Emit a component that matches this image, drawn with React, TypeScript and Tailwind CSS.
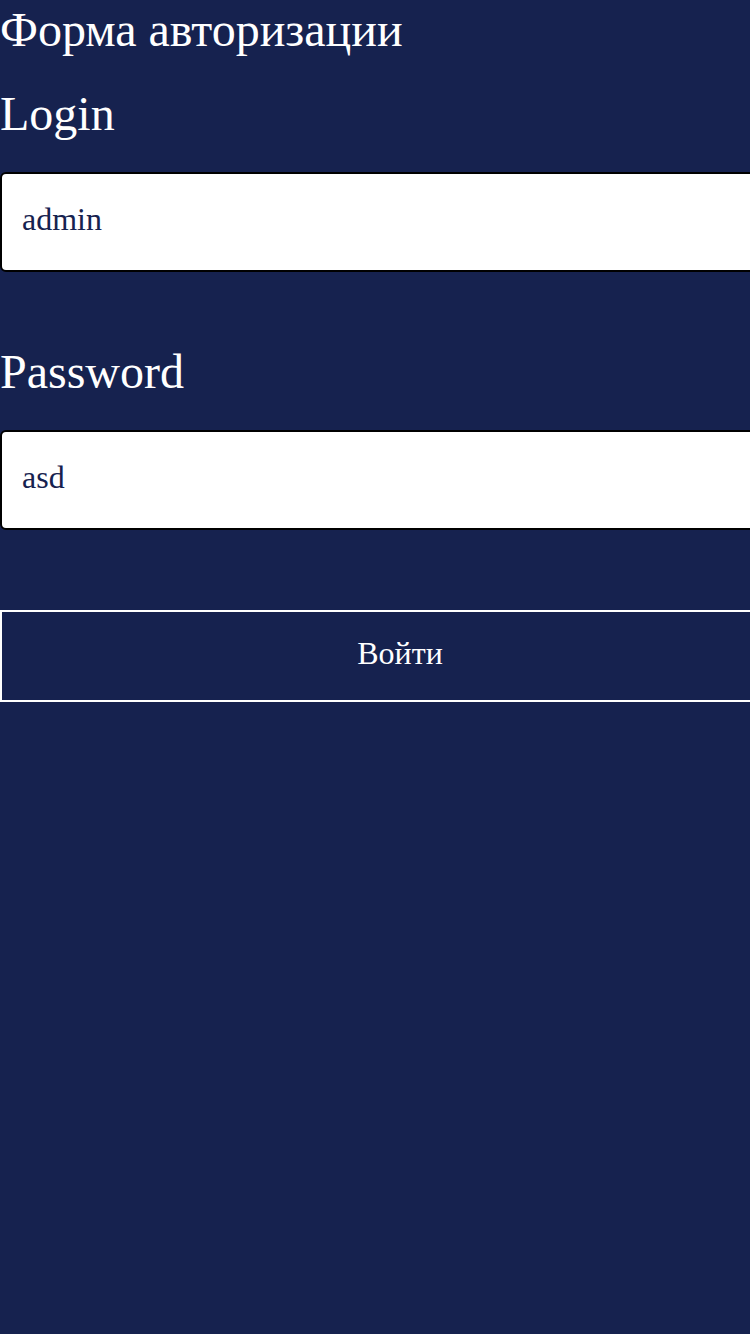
import React from "react";

export default function App() {
  return (
    <div className="min-h-[1334px] w-[750px] overflow-hidden bg-[#16224f] text-white" style={{ fontFamily: '"Liberation Serif", serif' }}>
      <div className="w-[800px]">
        <h1 className="pt-[2px] text-[48px] leading-[55px] m-0">Форма авторизации</h1>
        <div className="mt-[29px] text-[48px] leading-[55px]">Login</div>
        <input
          readOnly
          value="admin"
          className="mt-[31px] block h-[100px] w-[800px] rounded-[6px] border-2 border-black bg-white pl-[20px] pr-[20px] pb-[6px] text-[32px] text-[#16224f] outline-none"
          style={{ fontFamily: '"Liberation Serif", serif' }}
        />
        <div className="mt-[72px] text-[48px] leading-[55px]">Password</div>
        <input
          readOnly
          value="asd"
          className="mt-[31px] block h-[100px] w-[800px] rounded-[6px] border-2 border-black bg-white pl-[20px] pr-[20px] pb-[6px] text-[32px] text-[#16224f] outline-none"
          style={{ fontFamily: '"Liberation Serif", serif' }}
        />
        <button
          className="mt-[80px] block h-[92px] w-[800px] border-2 border-white bg-transparent pb-[6px] text-[32px] text-white"
          style={{ fontFamily: '"Liberation Serif", serif' }}
        >
          Войти
        </button>
      </div>
    </div>
  );
}
